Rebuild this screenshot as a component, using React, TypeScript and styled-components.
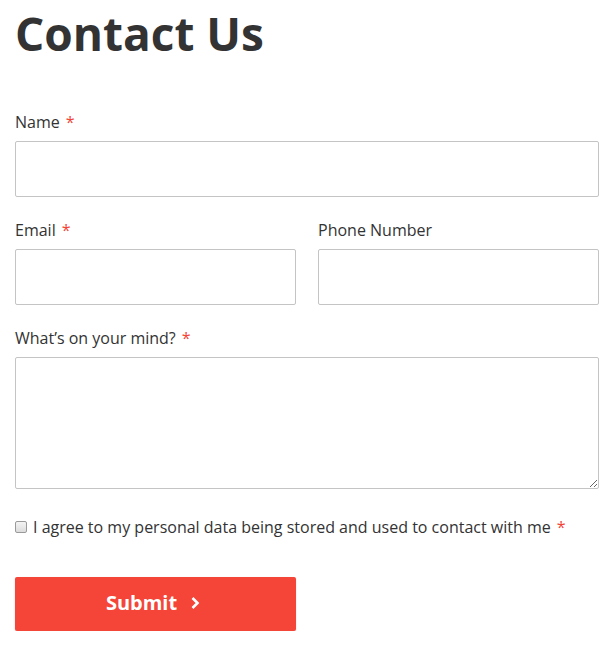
import React from "react";
import styled, { createGlobalStyle } from "styled-components";

const Global = createGlobalStyle`
  html, body { margin: 0; padding: 0; background: #fff; }
  body { font-family: "Open Sans", "Liberation Sans", sans-serif; color: #333; }
  * { box-sizing: border-box; }
`;

const Page = styled.div`
  padding: 0 16px 0 15px;
  width: 615px;
`;

const Title = styled.h1`
  margin: 5px 0 0;
  font-size: 46px;
  line-height: 56px;
  font-weight: 700;
  color: #333;
`;

const Form = styled.form`
  display: flex;
  flex-direction: column;
  gap: 22px;
  margin-top: 50px;
`;

const Row = styled.div`
  display: grid;
  grid-template-columns: 1fr 1fr;
  gap: 22px;
`;

const Field = styled.div`
  display: flex;
  flex-direction: column;
  gap: 8px;
`;

const Label = styled.label`
  font-size: 16px;
  line-height: 22px;
  color: #333;
`;

const Req = styled.span`
  color: #f44336;
  margin-left: 6px;
`;

const Input = styled.input`
  height: 56px;
  border: 1px solid #c4c4c4;
  border-radius: 2px;
  padding: 0 12px;
  font: inherit;
  width: 100%;
`;

const TextArea = styled.textarea`
  height: 132px;
  border: 1px solid #c4c4c4;
  border-radius: 2px;
  padding: 10px 12px;
  font: inherit;
  width: 100%;
  display: block;
`;

const CheckRow = styled.label`
  display: flex;
  align-items: center;
  gap: 6px;
  font-size: 16px;
  line-height: 22px;
  color: #333;
  margin-top: 5px;
`;

const Check = styled.input`
  appearance: none;
  -webkit-appearance: none;
  margin: 0;
  width: 12px;
  height: 12px;
  border: 1px solid #9a9a9a;
  border-radius: 2px;
  background: linear-gradient(#f4f4f4, #dcdcdc);
  flex: none;
`;

const Submit = styled.button`
  margin-top: 17px;
  width: 281px;
  height: 54px;
  border: none;
  border-radius: 2px;
  padding: 0 5px 3px 0;
  background: #f44538;
  color: #fff;
  font-family: "Open Sans", "Liberation Sans", sans-serif;
  font-weight: 700;
  font-size: 20px;
  display: flex;
  align-items: center;
  justify-content: center;
  gap: 13px;
  box-shadow: 0 1px 2px rgba(0,0,0,0.15);
`;

export default function App() {
  return (
    <Page>
      <Global />
      <Title>Contact Us</Title>
      <Form onSubmit={(e) => e.preventDefault()}>
        <Field>
          <Label>Name<Req>*</Req></Label>
          <Input type="text" />
        </Field>
        <Row>
          <Field>
            <Label>Email<Req>*</Req></Label>
            <Input type="email" />
          </Field>
          <Field>
            <Label>Phone Number</Label>
            <Input type="tel" />
          </Field>
        </Row>
        <Field>
          <Label>What’s on your mind?<Req>*</Req></Label>
          <TextArea />
        </Field>
        <CheckRow>
          <Check type="checkbox" />
          <span>I agree to my personal data being stored and used to contact with me<Req>*</Req></span>
        </CheckRow>
        <Submit type="submit">
          <span>Submit</span>
          <svg width="10" height="14" viewBox="0 0 10 14" fill="none">
            <path d="M2.5 2 L7.5 7 L2.5 12" stroke="#fff" strokeWidth="2.6" strokeLinecap="butt" />
          </svg>
        </Submit>
      </Form>
    </Page>
  );
}
